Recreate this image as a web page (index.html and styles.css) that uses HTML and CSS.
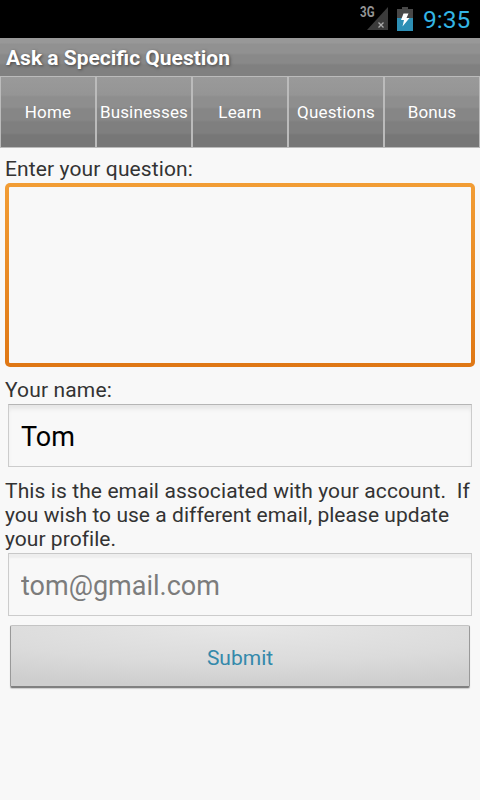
FILE: index.html
```html
<!DOCTYPE html>
<html lang="en">
  <head>
    <meta charset="UTF-8" />
    <title>Ask a Specific Question</title>
    <link rel="stylesheet" href="styles.css">
  </head>
  <body>
    <div class="status-bar">
      <svg class="signal" width="28" height="30" viewBox="0 -4 28 30">
        <path d="M28 1V24H7Z" fill="#3b3b3b" />
        <path d="M18.5 16.5L23.5 21.5M23.5 16.5L18.5 21.5" stroke="#aaa" stroke-width="1.3" />
        <text x="0" y="11" class="network" textLength="14.5" lengthAdjust="spacingAndGlyphs">3G</text>
      </svg>
      <svg class="battery" width="16" height="24" viewBox="0 0 16 24">
        <path d="M5 0H11V2H16V11H0V2H5Z" fill="#484848" />
        <path d="M0 11H16V24H0Z" fill="#2d8fb5" />
        <path d="M6.5 6.5H11.5L9.5 11H12.5L5.5 19.5L7 13H4Z" fill="#fff" />
      </svg>
      <span class="clock">9:35</span>
    </div>

    <h1>Ask a Specific Question</h1>

    <nav>
      <a>Home</a>
      <a>Businesses</a>
      <a>Learn</a>
      <a>Questions</a>
      <a>Bonus</a>
    </nav>

    <form>
      <label for="question">Enter your question:</label>
      <textarea id="question" name="question"></textarea>

      <label class="name-label" for="name">Your name:</label>
      <input type="text" id="name" name="name" value="Tom" />

      <label class="email-label" for="email"><span class="first-line">This is the email associated with your account.&nbsp; If</span><br />you wish to use a different email, please update<br />your profile.</label>
      <input class="email" type="email" id="email" name="email" placeholder="tom@gmail.com" />

      <button type="button">Submit</button>
    </form>
  </body>
</html>
```

FILE: styles.css
```css
* {
  box-sizing: border-box;
}

body {
  font-family: Roboto, sans-serif;
  background: #f8f8f8;
  margin: 0;
  height: 800px;
  overflow: hidden;
}

.status-bar {
  display: flex;
  justify-content: flex-end;
  height: 38px;
  padding-right: 10px;
  background: #000;
}

.signal {
  margin-top: 2px;
}

.network {
  fill: #949494;
  font-size: 14px;
  font-weight: bold;
}

.battery {
  margin: 7px 10px 0 9px;
}

.clock {
  width: 47px;
  color: #33b5e5;
  font-size: 24.5px;
  line-height: 39px;
  white-space: nowrap;
}

h1 {
  height: 38px;
  margin: 0;
  padding-left: 6px;
  background: linear-gradient(#989898 0 5px, #919191 6px 15px, #898989 17px 25px, #808080 27px);
  color: #fff;
  font-size: 21px;
  line-height: 40px;
  text-shadow: 1px 1px 3px #444;
}

nav {
  display: flex;
  height: 72px;
}

nav a {
  width: 96px;
  border: 1px solid #bbb;
  background: linear-gradient(#9a9a9a 0, #959595 19px, #8e8e8e 21px 31px, #868686 33px 44px, #7f7f7f 46px 57px, #777 59px) border-box;
  color: #fff;
  font-size: 17px;
  letter-spacing: 0.15px;
  line-height: 70px;
  text-align: center;
}

form {
  padding: 9px 5px 0;
}

label {
  display: block;
  color: #333;
  font-size: 21px;
  letter-spacing: 0.04px;
  line-height: 24px;
  white-space: nowrap;
}

label[for="question"] {
  letter-spacing: 0.12px;
}

textarea {
  display: block;
  width: 470px;
  height: 184px;
  margin-top: 2px;
  border: 4px solid transparent;
  border-radius: 5px;
  background: linear-gradient(#f8f8f8, #f8f8f8) padding-box, linear-gradient(#f29d35, #df7714) border-box;
  outline: none;
  resize: none;
}

.name-label {
  margin-top: 11px;
  letter-spacing: 0.14px;
}

.email-label {
  margin-top: 12px;
}

.first-line {
  letter-spacing: 0.1px;
}

input {
  display: block;
  width: 464px;
  height: 63px;
  margin: 2px 0 0 3px;
  padding: 2px 12px 0;
  border: 1px solid #ccc;
  border-top-color: #b5b5b5;
  border-radius: 0;
  background: #f8f8f8;
  box-shadow: inset 0 5px 4px -1px #e6e6e6;
  color: #000;
  font: 27px Roboto, sans-serif;
}

.email {
  border-top-color: #c8c8c8;
  box-shadow: inset 0 4px 2px #eee;
}

.email::placeholder {
  color: #7c7c7c;
}

button {
  display: block;
  width: 460px;
  height: 63px;
  margin: 9px 5px 0;
  padding: 4px 0 0;
  border: 1px solid #bbb;
  border-color: #c4c4c4 #999 #808080 #999;
  border-bottom-width: 2px;
  border-radius: 2px;
  background: radial-gradient(ellipse 100% 100% at 50% 0, #e7e7e7, #dbdbdb 60%, #cecece);
  box-shadow: 0 1px 1px #ccc;
  color: #3489ab;
  font: 21px Roboto, sans-serif;
}
```
